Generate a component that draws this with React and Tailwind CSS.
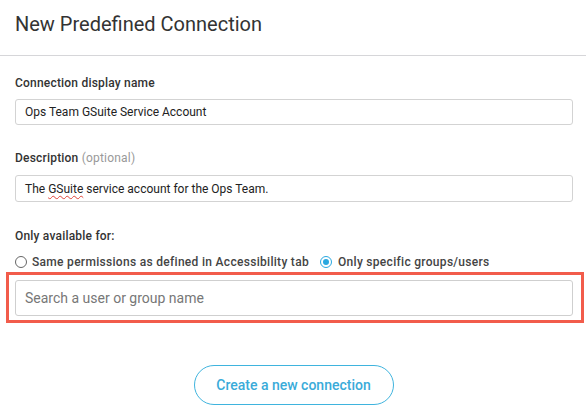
export default function App() {
  return (
    <div className="w-[586px] h-[419px] bg-white text-[#333] overflow-hidden" style={{ fontFamily: 'Roboto, "Liberation Sans", sans-serif' }}>
      <div className="h-[56px] border-b border-[#d6d6d9] px-[15px] pt-[12px]">
        <h1 className="text-[20px] leading-[24px] text-[#333]">New Predefined Connection</h1>
      </div>

      <div className="px-[15px]">
        <label className="block mt-[19px] text-[12px] leading-[16px] font-medium tracking-[0.2px]">Connection display name</label>
        <div className="mt-[8px] h-[26px] w-[558px] border border-[#d3d3d3] rounded-[3px] px-[9px] flex items-center text-[12px] text-[#222]">
          Ops Team GSuite Service Account
        </div>

        <label className="block mt-[25px] text-[12px] leading-[16px] font-medium tracking-[0.2px]">
          Description <span className="font-normal text-[#999]">(optional)</span>
        </label>
        <div className="mt-[9px] h-[27px] w-[558px] border border-[#d3d3d3] rounded-[3px] px-[9px] flex items-center text-[12px] text-[#222]">
          The <span className="underline decoration-wavy decoration-[#e0433a] decoration-1 underline-offset-2 mx-[3px]">GSuite</span> service account for the Ops Team.
        </div>

        <label className="block mt-[26px] text-[12px] leading-[16px] font-medium tracking-[0.2px]">Only available for:</label>

        <div className="mt-[10px] flex items-center text-[12px] leading-[16px] font-medium tracking-[0.3px] text-[#444]">
          <span className="w-[12px] h-[12px] rounded-full border border-[#666] mr-[5px]"></span>
          <span>Same permissions as defined in Accessibility tab</span>
          <span className="w-[12px] h-[12px] rounded-full border border-[#29a8e0] ml-[11px] mr-[6px] flex items-center justify-center">
            <span className="w-[6px] h-[6px] rounded-full bg-[#29a8e0]"></span>
          </span>
          <span>Only specific groups/users</span>
        </div>
      </div>

      <div className="mt-[2px] ml-[6px] w-[578px] border-[3px] border-[#f25c4b] pt-[5px] pb-[4px] pl-[6px]">
        <div className="h-[36px] w-[558px] border border-[#cfcfcf] rounded-[3px] px-[9px] flex items-center text-[14px] text-[#777]">
          Search a user or group name
        </div>
      </div>

      <div className="mt-[42px] flex justify-center pl-[1px]">
        <button className="w-[200px] h-[40px] rounded-full border border-[#3fb4de] text-[14px] font-medium text-[#3aabd9]">
          Create a new connection
        </button>
      </div>
    </div>
  )
}
